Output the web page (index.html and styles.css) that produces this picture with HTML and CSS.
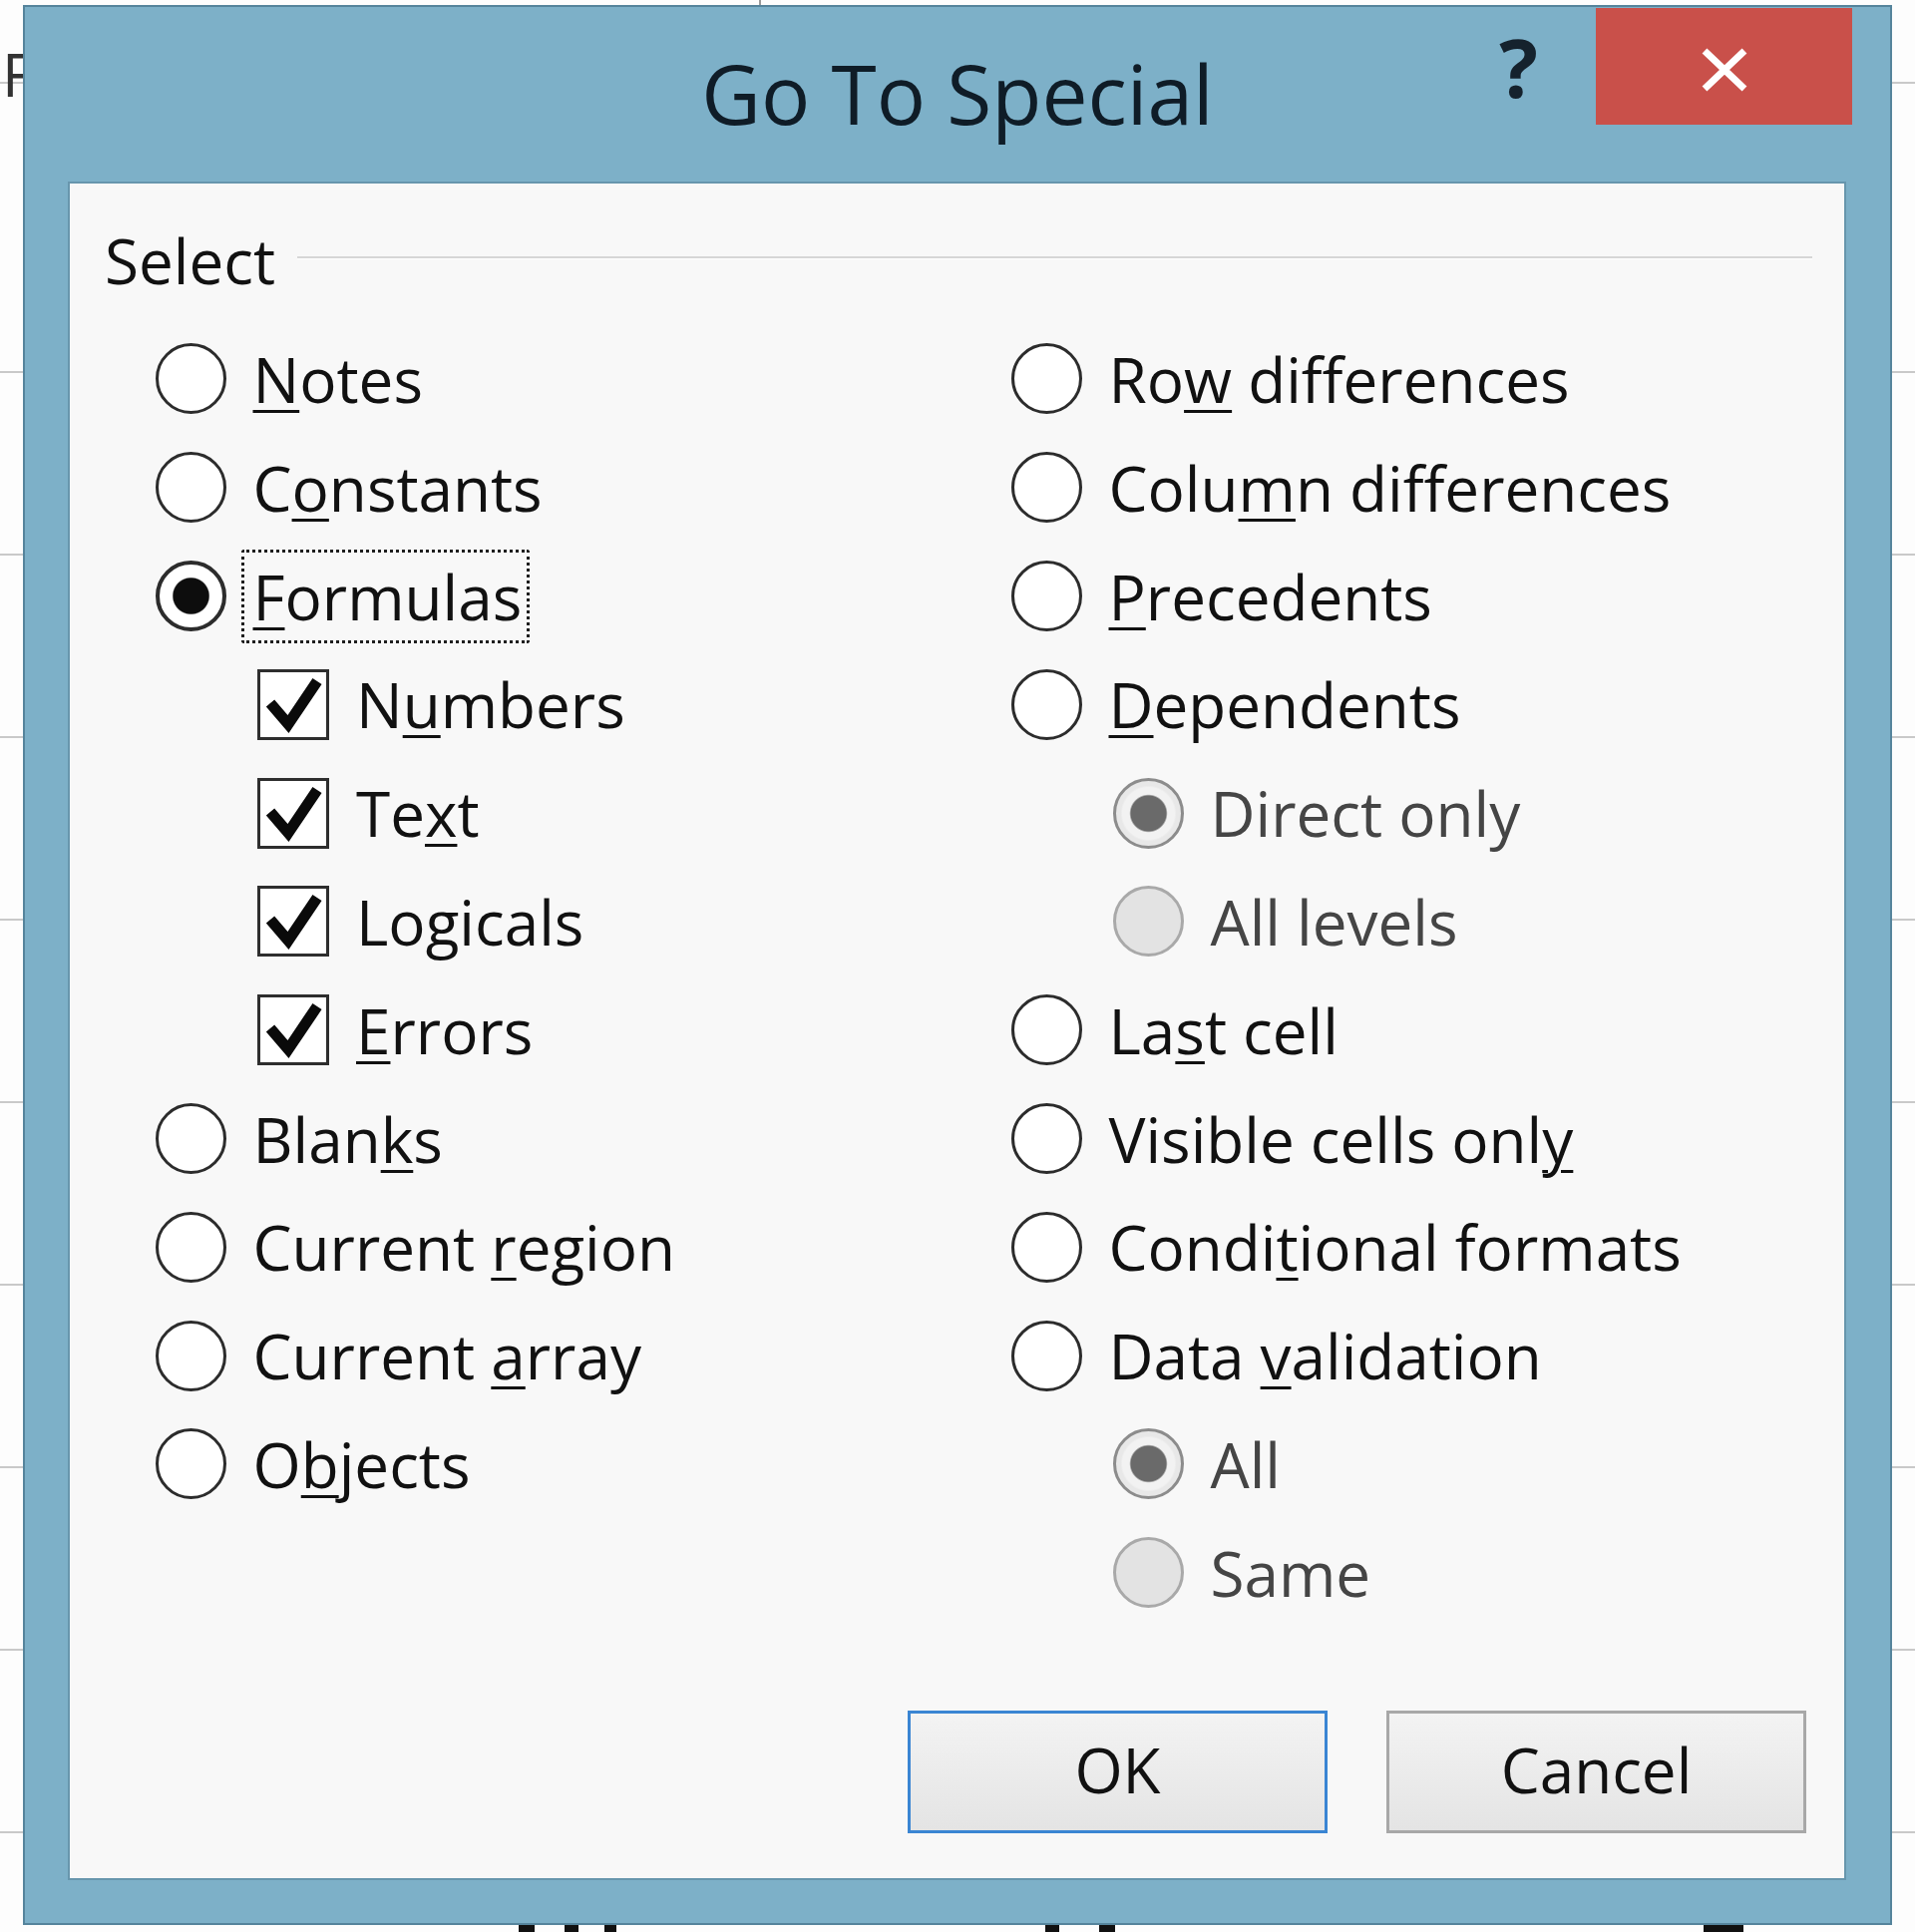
FILE: index.html
```html
<!DOCTYPE html>
<html lang="en">
<head>
<meta charset="utf-8">
<title>Go To Special</title>
<link rel="stylesheet" href="styles.css">
</head>
<body>
<div class="sheet-letter">F</div>
<div class="dialog">
  <header class="titlebar">
    <div class="tb-side"></div>
    <h1 class="title">Go To Special</h1>
    <div class="tb-side tb-right">
      <span class="help">?</span>
      <button class="close" aria-label="Close">
        <svg width="48" height="44" viewBox="0 0 48 44"><path d="M4 3 L44 41 M44 3 L4 41" stroke="#fff" stroke-width="7" fill="none"/></svg>
      </button>
    </div>
  </header>
  <div class="panel">
    <div class="group-head"><span class="group-label">Select</span><i class="rule"></i></div>
    <div class="options">
      <div class="col col-left">
        <div class="opt"><span class="radio"></span><span class="lbl"><u>N</u>otes</span></div>
        <div class="opt"><span class="radio"></span><span class="lbl">C<u>o</u>nstants</span></div>
        <div class="opt"><span class="radio on"></span><span class="lbl focus"><u>F</u>ormulas</span></div>
        <div class="opt sub"><span class="chk"><svg width="66" height="65" viewBox="0 0 66 65"><path d="M10 31 L28 52 L57 9" stroke="#0a0a0a" stroke-width="11" fill="none" stroke-linejoin="miter"/></svg></span><span class="lbl">N<u>u</u>mbers</span></div>
        <div class="opt sub"><span class="chk"><svg width="66" height="65" viewBox="0 0 66 65"><path d="M10 31 L28 52 L57 9" stroke="#0a0a0a" stroke-width="11" fill="none" stroke-linejoin="miter"/></svg></span><span class="lbl">Te<u>x</u>t</span></div>
        <div class="opt sub"><span class="chk"><svg width="66" height="65" viewBox="0 0 66 65"><path d="M10 31 L28 52 L57 9" stroke="#0a0a0a" stroke-width="11" fill="none" stroke-linejoin="miter"/></svg></span><span class="lbl">Lo<u>g</u>icals</span></div>
        <div class="opt sub"><span class="chk"><svg width="66" height="65" viewBox="0 0 66 65"><path d="M10 31 L28 52 L57 9" stroke="#0a0a0a" stroke-width="11" fill="none" stroke-linejoin="miter"/></svg></span><span class="lbl"><u>E</u>rrors</span></div>
        <div class="opt"><span class="radio"></span><span class="lbl">Blan<u>k</u>s</span></div>
        <div class="opt"><span class="radio"></span><span class="lbl">Current <u>r</u>egion</span></div>
        <div class="opt"><span class="radio"></span><span class="lbl">Current <u>a</u>rray</span></div>
        <div class="opt"><span class="radio"></span><span class="lbl">O<u>b</u>jects</span></div>
      </div>
      <div class="col col-right">
        <div class="opt"><span class="radio"></span><span class="lbl">Ro<u>w</u> differences</span></div>
        <div class="opt"><span class="radio"></span><span class="lbl">Colu<u>m</u>n differences</span></div>
        <div class="opt"><span class="radio"></span><span class="lbl"><u>P</u>recedents</span></div>
        <div class="opt"><span class="radio"></span><span class="lbl"><u>D</u>ependents</span></div>
        <div class="opt sub disabled"><span class="radio dis on"></span><span class="lbl">Direct only</span></div>
        <div class="opt sub disabled"><span class="radio dis"></span><span class="lbl">All levels</span></div>
        <div class="opt"><span class="radio"></span><span class="lbl">La<u>s</u>t cell</span></div>
        <div class="opt"><span class="radio"></span><span class="lbl">Visible cells onl<u>y</u></span></div>
        <div class="opt"><span class="radio"></span><span class="lbl">Condi<u>t</u>ional formats</span></div>
        <div class="opt"><span class="radio"></span><span class="lbl">Data <u>v</u>alidation</span></div>
        <div class="opt sub disabled"><span class="radio dis on"></span><span class="lbl">All</span></div>
        <div class="opt sub disabled"><span class="radio dis"></span><span class="lbl">Same</span></div>
      </div>
    </div>
    <div class="buttons">
      <button class="btn default">OK</button>
      <button class="btn">Cancel</button>
    </div>
  </div>
</div>
<div class="below">
  <i class="bit b1"></i><i class="bit b2"></i><i class="bit b3"></i><i class="bit b4"></i><i class="bit b5"></i><i class="bit b6"></i>
</div>
</body>
</html>
```
FILE: styles.css
```css
* { box-sizing: border-box; }
html, body { margin: 0; padding: 0; }
body {
  width: 1920px;
  height: 1937px;
  overflow: hidden;
  position: relative;
  font-family: "Open Sans", "Noto Sans", sans-serif;
  color: #111;
  background-color: #fdfdfd;
  background-image:
    linear-gradient(to right, transparent 761px, #9a9a9a 761px, #9a9a9a 763px, transparent 763px),
    repeating-linear-gradient(180deg, transparent 0, transparent 181px, #c9c9c9 181px, #c9c9c9 183px);
  background-size: 100% 6px, 100% 100%;
  background-repeat: no-repeat, repeat;
  background-position: 0 0, 0 191px;
}
.sheet-letter {
  position: absolute;
  left: 2px;
  top: 44px;
  font-size: 60px;
  line-height: 1;
  color: #333;
}
.dialog {
  position: relative;
  margin: 5px 0 0 23px;
  width: 1874px;
  height: 1925px;
  background: #7db0c8;
  border: 2px solid #55849c;
  display: flex;
  flex-direction: column;
}
.titlebar {
  height: 175px;
  flex: none;
  display: grid;
  grid-template-columns: 1fr auto 1fr;
  align-items: start;
}
.title {
  margin: 45px 0 0;
  font-weight: 400;
  font-size: 82px;
  line-height: 82px;
  color: #0f1c27;
  white-space: nowrap;
}
.tb-right {
  display: flex;
  justify-content: flex-end;
  align-items: flex-start;
}
.help {
  margin-top: 19px;
  margin-right: 58px;
  font-weight: 700;
  font-size: 81px;
  line-height: 81px;
  color: #15222d;
}
.close {
  margin: 1px 38px 0 0;
  width: 257px;
  height: 117px;
  border: 0;
  padding: 7px 0 0;
  background: #c9504a;
  display: flex;
  align-items: center;
  justify-content: center;
}
.close svg { display: block; }
.panel {
  flex: none;
  margin: 0 44px 0 43px;
  height: 1703px;
  background: #f8f8f8;
  border: 2px solid #6796ad;
  padding: 46px 32px 45px 35px;
  display: flex;
  flex-direction: column;
}
.group-head {
  display: flex;
  align-items: center;
  height: 62px;
}
.group-label {
  font-size: 62px;
  line-height: 1;
  font-weight: 500;
}
.rule {
  flex: 1;
  height: 2px;
  margin: 0 0 6px 22px;
  background: #d6d6d6;
  box-shadow: 0 1px 0 #fff;
}
.options {
  margin-top: 33.6px;
  padding-left: 50.5px;
  display: grid;
  grid-template-columns: 858px 1fr;
  align-items: start;
}
.opt {
  height: 108.8px;
  display: flex;
  align-items: center;
}
.opt.sub { padding-left: 102px; }
.lbl {
  font-size: 62px;
  line-height: 1;
  font-weight: 500;
  white-space: nowrap;
}
.lbl u {
  text-decoration-thickness: 3px;
  text-underline-offset: 7px;
}
.disabled .lbl { color: #454545; }
.radio {
  flex: none;
  width: 71px;
  height: 71px;
  border-radius: 50%;
  border: 3.5px solid #2c2c2c;
  background: #fff;
  margin-right: 27px;
}
.radio.on {
  border-width: 4px;
  background: radial-gradient(circle closest-side, #0d0d0d 0, #0d0d0d 56%, #fff 60%);
}
.radio.dis {
  border: 3px solid #a9a9a9;
  background: #e3e3e3;
}
.radio.dis.on {
  border-color: #8c8c8c;
  background: radial-gradient(circle closest-side, #6a6a6a 0, #6a6a6a 54%, #f2f2f2 59%, #f2f2f2 80%, #e8e8e8 86%);
}
.chk {
  flex: none;
  width: 72px;
  height: 71px;
  margin-left: 0.5px;
  margin-right: 27px;
  border: 3px solid #2e2e2e;
  background: #fff;
  display: flex;
  align-items: center;
  justify-content: center;
}
.chk svg { display: block; }
.focus {
  display: inline-block;
  line-height: 88px;
  padding: 0 5px 0 9px;
  margin-left: -12px;
  border: 3px dotted #1e1e1e;
  border-radius: 3px;
}
.buttons {
  margin-top: auto;
  display: flex;
  justify-content: flex-end;
  gap: 59px;
  padding-right: 6px;
}
.btn {
  width: 421px;
  height: 123px;
  border: 3px solid #a8a8a8;
  background: linear-gradient(#f3f3f3, #e4e4e4);
  font-family: "Open Sans", "Noto Sans", sans-serif;
  font-size: 62px;
  font-weight: 500;
  line-height: 1;
  color: #111;
  padding: 0 0 6px;
}
.btn.default {
  border-color: #3a85d3;
}
.below {
  height: 7px;
  display: flex;
  align-items: flex-start;
}
.bit {
  display: block;
  height: 7px;
  background: #111;
}
.b1 { margin-left: 520px; width: 16px; }
.b2 { margin-left: 30px; width: 14px; }
.b3 { margin-left: 26px; width: 12px; }
.b4 { margin-left: 430px; width: 14px; }
.b5 { margin-left: 40px; width: 16px; }
.b6 { margin-left: 590px; width: 40px; }
```
